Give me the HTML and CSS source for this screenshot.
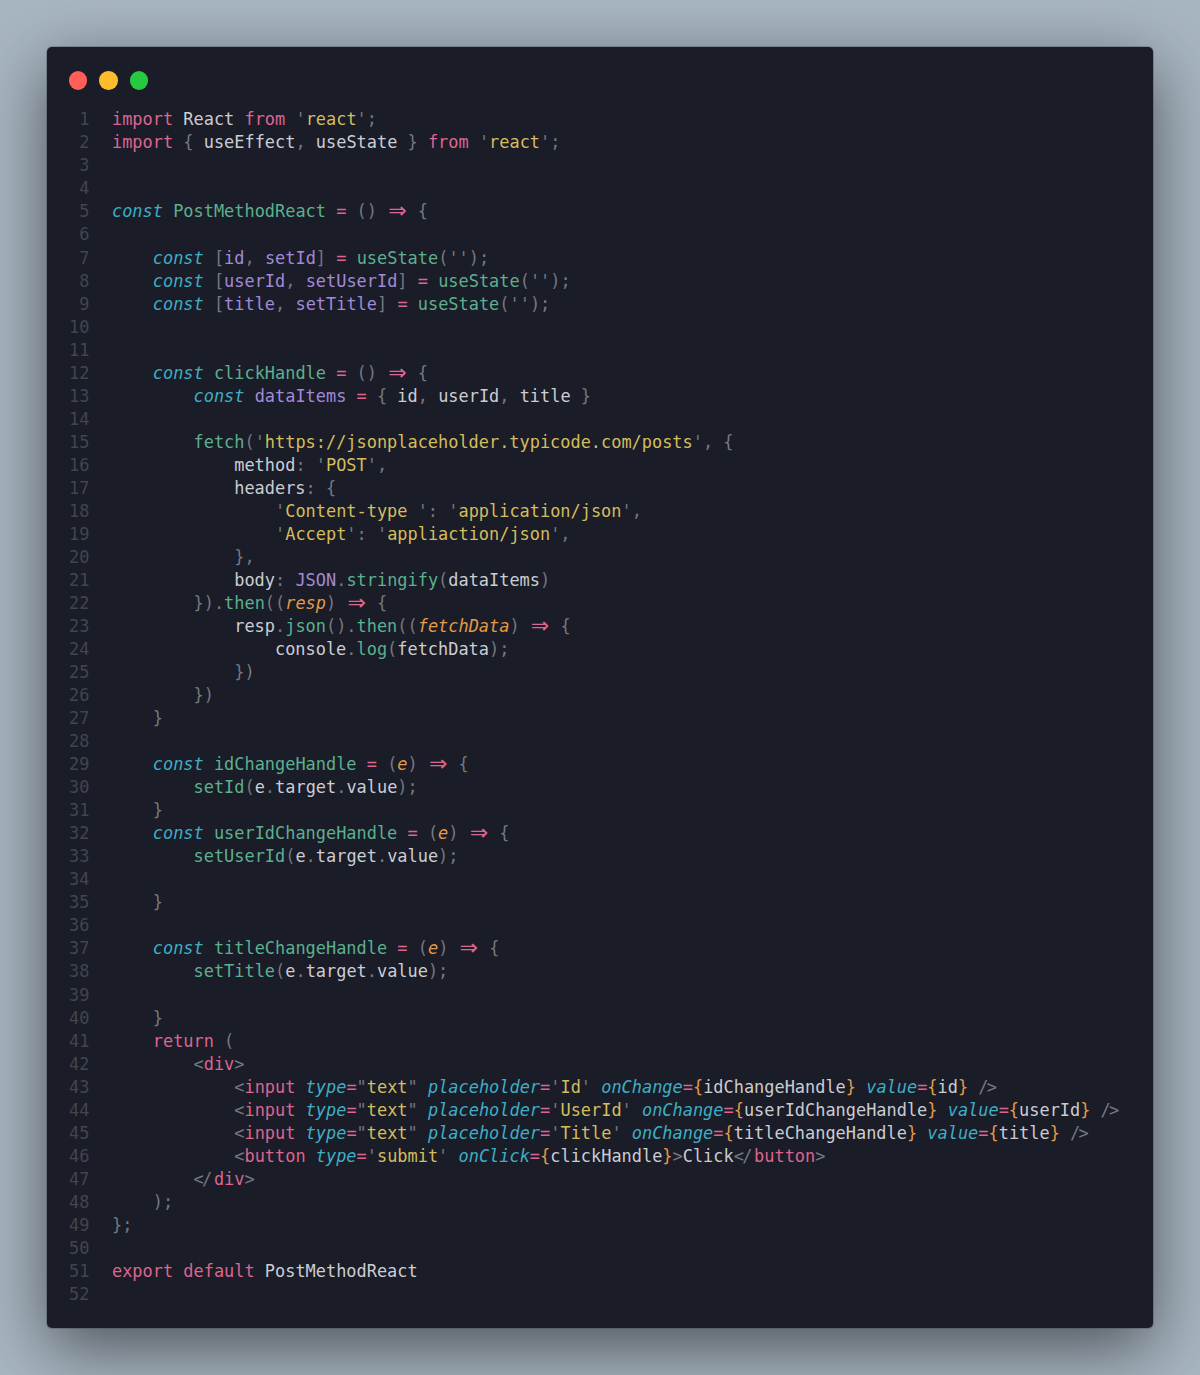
FILE: index.html
```html
<!DOCTYPE html>
<html lang="en">
<head>
<meta charset="utf-8">
<title>PostMethodReact</title>
<link rel="stylesheet" href="styles.css">
</head>
<body>
<main class="window">
<header class="controls"><span class="dot red"></span><span class="dot yellow"></span><span class="dot green"></span></header>
<div class="code">
<div class="line"><span class="n">1</span><code><i class="k">import</i> React <i class="k">from</i> <i class="p">'</i><i class="s">react</i><i class="p">';</i></code></div>
<div class="line"><span class="n">2</span><code><i class="k">import</i> <i class="p">{</i> useEffect<i class="p">,</i> useState <i class="p">}</i> <i class="k">from</i> <i class="p">'</i><i class="s">react</i><i class="p">';</i></code></div>
<div class="line"><span class="n">3</span><code></code></div>
<div class="line"><span class="n">4</span><code></code></div>
<div class="line"><span class="n">5</span><code><em class="b">const</em> <i class="f">PostMethodReact</i> <i class="k">=</i> <i class="p">()</i> <b class="ar">⇒</b> <i class="p">{</i></code></div>
<div class="line"><span class="n">6</span><code></code></div>
<div class="line"><span class="n">7</span><code>    <em class="b">const</em> <i class="p">[</i><i class="v">id</i><i class="p">,</i> <i class="v">setId</i><i class="p">]</i> <i class="k">=</i> <i class="f">useState</i><i class="p">('');</i></code></div>
<div class="line"><span class="n">8</span><code>    <em class="b">const</em> <i class="p">[</i><i class="v">userId</i><i class="p">,</i> <i class="v">setUserId</i><i class="p">]</i> <i class="k">=</i> <i class="f">useState</i><i class="p">('');</i></code></div>
<div class="line"><span class="n">9</span><code>    <em class="b">const</em> <i class="p">[</i><i class="v">title</i><i class="p">,</i> <i class="v">setTitle</i><i class="p">]</i> <i class="k">=</i> <i class="f">useState</i><i class="p">('');</i></code></div>
<div class="line"><span class="n">10</span><code></code></div>
<div class="line"><span class="n">11</span><code></code></div>
<div class="line"><span class="n">12</span><code>    <em class="b">const</em> <i class="f">clickHandle</i> <i class="k">=</i> <i class="p">()</i> <b class="ar">⇒</b> <i class="p">{</i></code></div>
<div class="line"><span class="n">13</span><code>        <em class="b">const</em> <i class="v">dataItems</i> <i class="k">=</i> <i class="p">{</i> id<i class="p">,</i> userId<i class="p">,</i> title <i class="p">}</i></code></div>
<div class="line"><span class="n">14</span><code></code></div>
<div class="line"><span class="n">15</span><code>        <i class="f">fetch</i><i class="p">('</i><i class="s">https://jsonplaceholder.typicode.com/posts</i><i class="p">', {</i></code></div>
<div class="line"><span class="n">16</span><code>            method<i class="p">:</i> <i class="p">'</i><i class="s">POST</i><i class="p">',</i></code></div>
<div class="line"><span class="n">17</span><code>            headers<i class="p">: {</i></code></div>
<div class="line"><span class="n">18</span><code>                <i class="p">'</i><i class="s">Content-type </i><i class="p">':</i> <i class="p">'</i><i class="s">application/json</i><i class="p">',</i></code></div>
<div class="line"><span class="n">19</span><code>                <i class="p">'</i><i class="s">Accept</i><i class="p">':</i> <i class="p">'</i><i class="s">appliaction/json</i><i class="p">',</i></code></div>
<div class="line"><span class="n">20</span><code>            <i class="p">},</i></code></div>
<div class="line"><span class="n">21</span><code>            body<i class="p">:</i> <i class="v">JSON</i><i class="p">.</i><i class="f">stringify</i><i class="p">(</i>dataItems<i class="p">)</i></code></div>
<div class="line"><span class="n">22</span><code>        <i class="p">}).</i><i class="f">then</i><i class="p">((</i><em class="o">resp</em><i class="p">)</i> <b class="ar">⇒</b> <i class="p">{</i></code></div>
<div class="line"><span class="n">23</span><code>            resp<i class="p">.</i><i class="f">json</i><i class="p">().</i><i class="f">then</i><i class="p">((</i><em class="o">fetchData</em><i class="p">)</i> <b class="ar">⇒</b> <i class="p">{</i></code></div>
<div class="line"><span class="n">24</span><code>                console<i class="p">.</i><i class="f">log</i><i class="p">(</i>fetchData<i class="p">);</i></code></div>
<div class="line"><span class="n">25</span><code>            <i class="p">})</i></code></div>
<div class="line"><span class="n">26</span><code>        <i class="p">})</i></code></div>
<div class="line"><span class="n">27</span><code>    <i class="p">}</i></code></div>
<div class="line"><span class="n">28</span><code></code></div>
<div class="line"><span class="n">29</span><code>    <em class="b">const</em> <i class="f">idChangeHandle</i> <i class="k">=</i> <i class="p">(</i><em class="o">e</em><i class="p">)</i> <b class="ar">⇒</b> <i class="p">{</i></code></div>
<div class="line"><span class="n">30</span><code>        <i class="f">setId</i><i class="p">(</i>e<i class="p">.</i>target<i class="p">.</i>value<i class="p">);</i></code></div>
<div class="line"><span class="n">31</span><code>    <i class="p">}</i></code></div>
<div class="line"><span class="n">32</span><code>    <em class="b">const</em> <i class="f">userIdChangeHandle</i> <i class="k">=</i> <i class="p">(</i><em class="o">e</em><i class="p">)</i> <b class="ar">⇒</b> <i class="p">{</i></code></div>
<div class="line"><span class="n">33</span><code>        <i class="f">setUserId</i><i class="p">(</i>e<i class="p">.</i>target<i class="p">.</i>value<i class="p">);</i></code></div>
<div class="line"><span class="n">34</span><code></code></div>
<div class="line"><span class="n">35</span><code>    <i class="p">}</i></code></div>
<div class="line"><span class="n">36</span><code></code></div>
<div class="line"><span class="n">37</span><code>    <em class="b">const</em> <i class="f">titleChangeHandle</i> <i class="k">=</i> <i class="p">(</i><em class="o">e</em><i class="p">)</i> <b class="ar">⇒</b> <i class="p">{</i></code></div>
<div class="line"><span class="n">38</span><code>        <i class="f">setTitle</i><i class="p">(</i>e<i class="p">.</i>target<i class="p">.</i>value<i class="p">);</i></code></div>
<div class="line"><span class="n">39</span><code></code></div>
<div class="line"><span class="n">40</span><code>    <i class="p">}</i></code></div>
<div class="line"><span class="n">41</span><code>    <i class="k">return</i> <i class="p">(</i></code></div>
<div class="line"><span class="n">42</span><code>        <i class="p">&lt;</i><i class="k">div</i><i class="p">&gt;</i></code></div>
<div class="line"><span class="n">43</span><code>            <i class="p">&lt;</i><i class="k">input</i> <em class="b">type</em><i class="k">=</i><i class="p">"</i><i class="s">text</i><i class="p">"</i> <em class="b">placeholder</em><i class="k">=</i><i class="p">'</i><i class="s">Id</i><i class="p">'</i> <em class="b">onChange</em><i class="k">=</i><i class="o">{</i>idChangeHandle<i class="o">}</i> <em class="b">value</em><i class="k">=</i><i class="o">{</i>id<i class="o">}</i> <i class="lig">/&gt;</i></code></div>
<div class="line"><span class="n">44</span><code>            <i class="p">&lt;</i><i class="k">input</i> <em class="b">type</em><i class="k">=</i><i class="p">"</i><i class="s">text</i><i class="p">"</i> <em class="b">placeholder</em><i class="k">=</i><i class="p">'</i><i class="s">UserId</i><i class="p">'</i> <em class="b">onChange</em><i class="k">=</i><i class="o">{</i>userIdChangeHandle<i class="o">}</i> <em class="b">value</em><i class="k">=</i><i class="o">{</i>userId<i class="o">}</i> <i class="lig">/&gt;</i></code></div>
<div class="line"><span class="n">45</span><code>            <i class="p">&lt;</i><i class="k">input</i> <em class="b">type</em><i class="k">=</i><i class="p">"</i><i class="s">text</i><i class="p">"</i> <em class="b">placeholder</em><i class="k">=</i><i class="p">'</i><i class="s">Title</i><i class="p">'</i> <em class="b">onChange</em><i class="k">=</i><i class="o">{</i>titleChangeHandle<i class="o">}</i> <em class="b">value</em><i class="k">=</i><i class="o">{</i>title<i class="o">}</i> <i class="lig">/&gt;</i></code></div>
<div class="line"><span class="n">46</span><code>            <i class="p">&lt;</i><i class="k">button</i> <em class="b">type</em><i class="k">=</i><i class="p">'</i><i class="s">submit</i><i class="p">'</i> <em class="b">onClick</em><i class="k">=</i><i class="o">{</i>clickHandle<i class="o">}</i><i class="p">&gt;</i>Click<i class="lig">&lt;/</i><i class="k">button</i><i class="p">&gt;</i></code></div>
<div class="line"><span class="n">47</span><code>        <i class="lig">&lt;/</i><i class="k">div</i><i class="p">&gt;</i></code></div>
<div class="line"><span class="n">48</span><code>    <i class="p">);</i></code></div>
<div class="line"><span class="n">49</span><code><i class="p">};</i></code></div>
<div class="line"><span class="n">50</span><code></code></div>
<div class="line"><span class="n">51</span><code><i class="k">export</i> <i class="k">default</i> PostMethodReact</code></div>
<div class="line"><span class="n">52</span><code></code></div>
</div>
</main>
</body>
</html>
```
FILE: styles.css
```css
html, body { margin: 0; }
body {
  width: 1200px;
  height: 1375px;
  box-sizing: border-box;
  padding: 47px;
  overflow: hidden;
  background: #a8b6c2;
}
.window {
  box-sizing: border-box;
  width: 1106px;
  height: 1281px;
  border-radius: 5px;
  background: #1a1c28;
  box-shadow: 0 0 0 1px rgba(60, 64, 76, .3), 0 20px 68px rgba(0, 0, 0, .55);
  padding: 24px 22px 0;
}
.controls { display: flex; gap: 12px; height: 22px; margin-bottom: 15.32px; }
.dot { width: 18.4px; height: 18.4px; border-radius: 50%; margin-top: .4px; }
.red { background: #ff5f56; }
.yellow { background: #ffbd2e; }
.green { background: #27c93f; }
.code {
  font-family: "DejaVu Sans Mono", monospace;
  font-size: 16.93px;
  line-height: 23.04px;
  color: #cbcdd2;
}
.line { display: flex; height: 23.04px; }
.n { width: 20.4px; margin-right: 22.6px; text-align: right; color: #42454f; flex: none; }
code { font: inherit; white-space: pre; }
i, em, b { font-style: normal; font-weight: 400; }
em { font-style: italic; }
.k { color: #dd6590; }
.s { color: #d4bd5c; }
.f { color: #5cb08e; }
.b { color: #3eaec5; }
.o { color: #e39a47; }
.v { color: #a18ad6; }
.p { color: #75787f; }
.lig { color: #75787f; letter-spacing: -.1em; margin-right: .2em; }
.ar { display: inline-block; width: 20.4px; padding-right: 1px; margin-right: -1px; text-align: center; color: #dd6590; font-family: "DejaVu Sans", sans-serif; font-size: 22px; line-height: 0; vertical-align: -1px; }
```
